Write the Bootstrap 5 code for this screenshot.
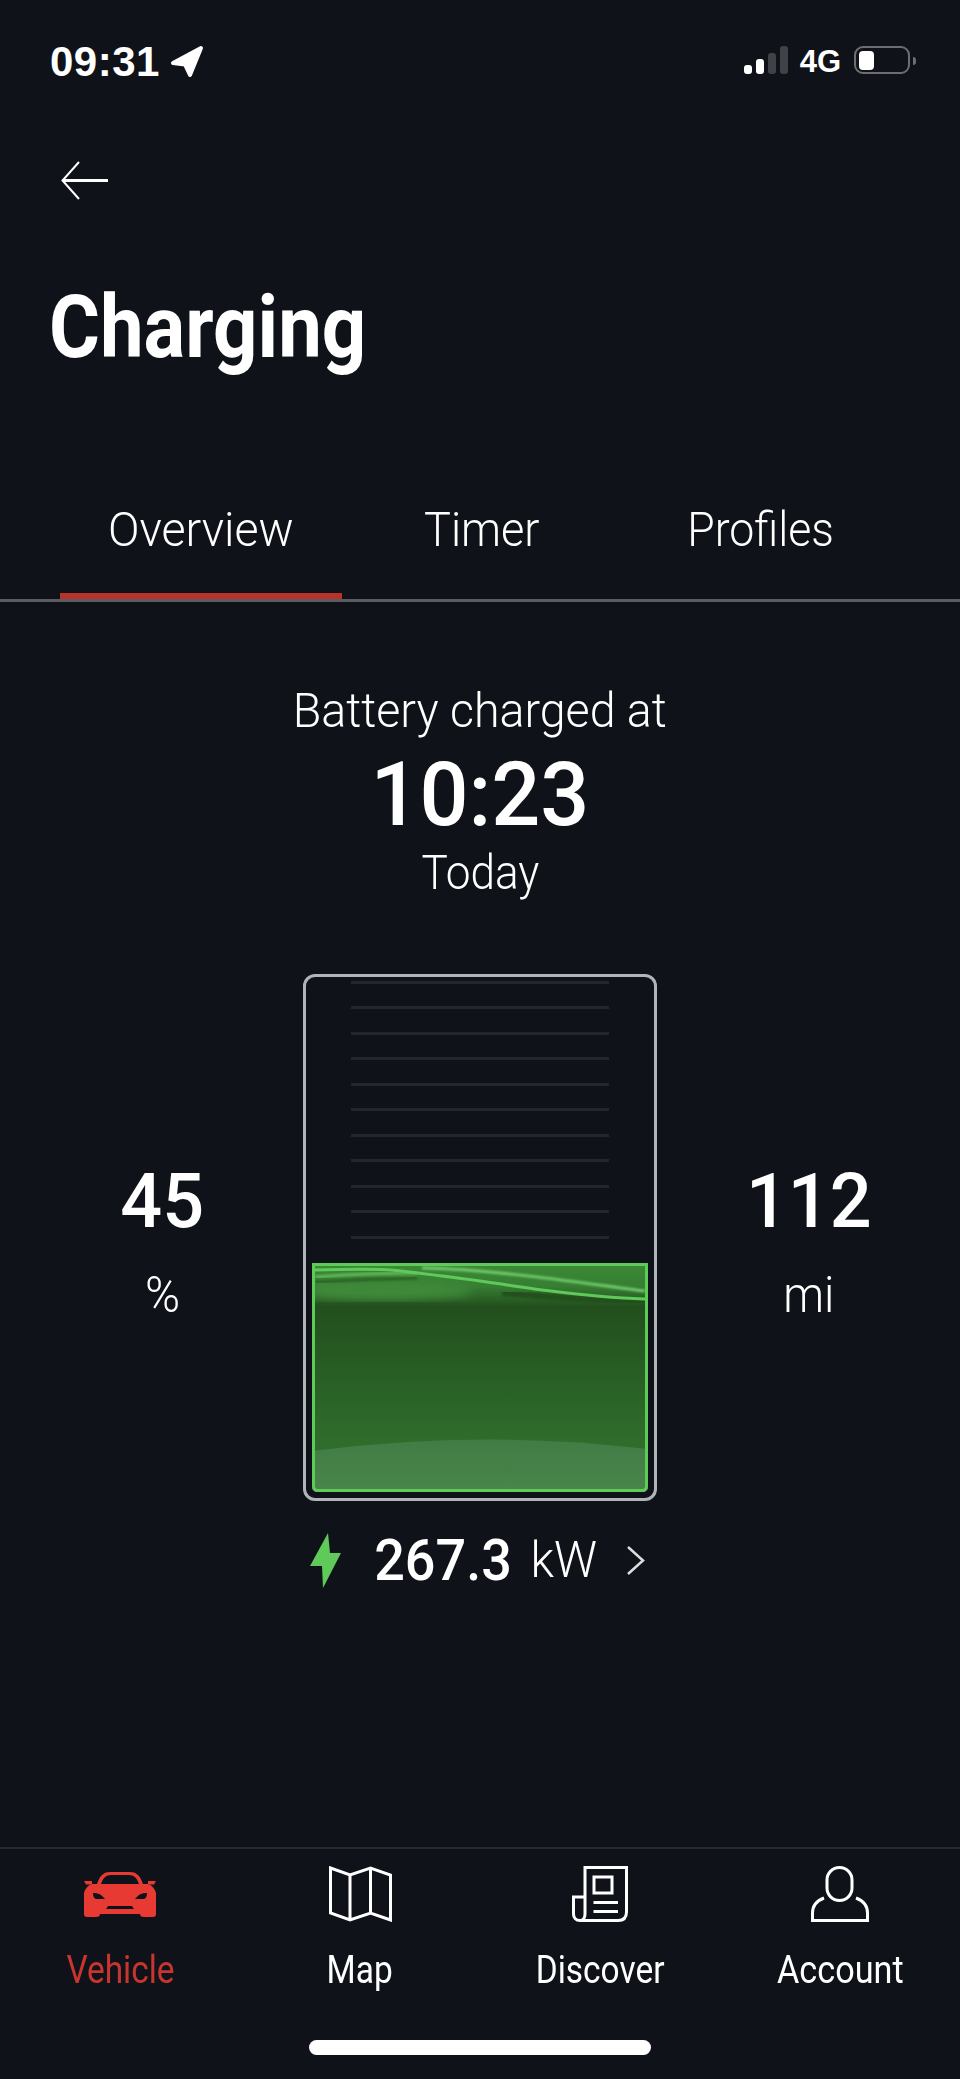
<!DOCTYPE html>
<html lang="en">
<head>
<meta charset="UTF-8">
<meta name="viewport" content="width=device-width, initial-scale=1">
<title>Charging</title>
<link href="https://cdn.jsdelivr.net/npm/bootstrap@5.3.3/dist/css/bootstrap.min.css" rel="stylesheet">
<style>
body { background: #0f1319; color: #fff; font-family: "Roboto", "Liberation Sans", sans-serif; font-weight: 300; }
.phone { width: 960px; height: 2079px; overflow: hidden; }
.squeeze { display: inline-block; white-space: nowrap; }
.sq-88 { transform: scaleX(.88); }
.sq-90 { transform: scaleX(.90); }
.sq-91 { transform: scaleX(.91); }
.sq-92 { transform: scaleX(.92); }
.sq-93 { transform: scaleX(.93); }
.sq-95 { transform: scaleX(.95); }
.sq-96 { transform: scaleX(.96); }
.sq-97 { transform: scaleX(.97); }

.statusbar { height: 100px; padding: 44px 44px 0 50px; font-family: "Liberation Sans", sans-serif; font-weight: 700; }
.clock { font-size: 42px; line-height: 36px; letter-spacing: .5px; }
.loc-arrow { margin-left: 10px; }
.net-type { font-size: 31px; line-height: 36px; margin: 0 13px 0 12px; }
.sig-bars { height: 28px; gap: 4px; margin-top: 2px; }
.sig-bars i { display: block; width: 8px; border-radius: 3px; background: #fff; }
.sig-bars .b1 { height: 9px; }
.sig-bars .b2 { height: 15px; }
.sig-bars .b3 { height: 21px; background: #3f4246; }
.sig-bars .b4 { height: 28px; background: #3f4246; }
.batt-icon { width: 56px; height: 28px; margin-top: 2px; border: 2.5px solid #6c6e72; border-radius: 9px; padding: 2.5px; }
.batt-icon i { display: block; width: 15px; height: 100%; background: #fff; border-radius: 4px; }
.batt-tip { width: 3px; height: 8px; margin: 13px 0 0 3px; background: #6c6e72; border-radius: 0 4px 4px 0; }

.back-row { padding: 61px 0 0 61px; height: 182px; }
.page-title { font-size: 88px; line-height: 90px; font-weight: 700; margin: 0 0 0 49px; }
.page-title .squeeze { transform: scaleX(.885); transform-origin: left center; }
.tab-row { margin-top: 128px; padding-left: 60px; border-bottom: 3px solid #5a5c60; }
.tab-item { width: 282px; height: 99px; font-size: 49px; line-height: 60px; text-align: center; border-bottom: 6px solid transparent; }
.tab-item.tab-on { border-bottom-color: #b8322c; }
.tab-item + .tab-item { width: 279px; }

.eta { padding-top: 81px; }
.eta-label { font-size: 48px; line-height: 56px; }
.eta-time { font-size: 89px; line-height: 90px; font-weight: 500; margin-top: 11px; }
.eta-day { font-size: 49px; line-height: 56px; margin-top: 5px; }

.gauge-row { margin-top: 73px; height: 527px; }
.stat { width: 303px; padding-top: 11px; }
.stat-left { padding-left: 22px; }
.stat-num { font-size: 76px; line-height: 80px; font-weight: 500; }
.stat-unit { font-size: 50px; line-height: 60px; margin-top: 24px; }
.batt-box { width: 354px; height: 527px; border: 3px solid #b0b3b8; border-radius: 12px; padding: 3.5px 6px 6px; }
.level-lines { gap: 22.5px; }
.level-lines i { display: block; width: 258px; height: 3px; background: #23262c; }
.batt-fill { width: 336px; height: 229px; display: block; }

.power-row { margin-top: 32px; height: 55px; padding-left: 310px; }
.power-num { width: 135px; margin-left: 34px; font-size: 58px; line-height: 55px; font-weight: 500; }
.power-unit { width: 62px; margin-left: 23px; font-size: 50px; line-height: 55px; }
.power-more { margin-left: 32px; }

.tabbar { margin-top: auto; border-top: 2px solid #26292e; padding-top: 15px; }
.tabbar-item { width: 240px; }
.tabbar-icon { height: 60px; }
.tabbar-label { font-size: 38px; line-height: 44px; margin-top: 24px; font-weight: 400; }
.tabbar-item.item-on .tabbar-label { color: #c8352f; }
.home-bar { width: 342px; height: 15px; border-radius: 8px; background: #fff; margin: 48px auto 24px; }
</style>
</head>
<body>
<div class="phone d-flex flex-column">

  <div class="statusbar d-flex justify-content-between">
    <div class="d-flex">
      <div class="clock">09:31</div>
      <svg class="loc-arrow" width="34" height="34" viewBox="0 0 34 34"><path d="M31 4 L3 19 L15 20.5 L20 31 Z" fill="#fff" stroke="#fff" stroke-width="4" stroke-linejoin="round"/></svg>
    </div>
    <div class="d-flex">
      <div class="sig-bars d-flex align-items-end"><i class="b1"></i><i class="b2"></i><i class="b3"></i><i class="b4"></i></div>
      <div class="net-type">4G</div>
      <div class="batt-icon"><i></i></div>
      <div class="batt-tip"></div>
    </div>
  </div>

  <div class="back-row">
    <svg class="d-block" width="48" height="39" viewBox="0 0 48 39" fill="none" stroke="#fff" stroke-width="2"><path d="M18 1 L1.5 19.5 L18 38"/><path d="M2 19.5 H47" stroke-width="3"/></svg>
  </div>

  <h1 class="page-title"><span class="squeeze">Charging</span></h1>

  <div class="tab-row d-flex">
    <div class="tab-item tab-on"><span class="squeeze sq-95">Overview</span></div>
    <div class="tab-item"><span class="squeeze sq-92">Timer</span></div>
    <div class="tab-item"><span class="squeeze sq-91">Profiles</span></div>
  </div>

  <div class="eta text-center">
    <div class="eta-label"><span class="squeeze sq-97">Battery charged at</span></div>
    <div class="eta-time"><span class="squeeze sq-97">10:23</span></div>
    <div class="eta-day"><span class="squeeze sq-90">Today</span></div>
  </div>

  <div class="gauge-row d-flex align-items-center">
    <div class="stat stat-left text-center">
      <div class="stat-num"><span class="squeeze sq-97">45</span></div>
      <div class="stat-unit"><span class="squeeze sq-95">%</span></div>
    </div>
    <div class="batt-box d-flex flex-column align-items-center flex-shrink-0">
      <div class="level-lines d-flex flex-column flex-fill">
        <i></i><i></i><i></i><i></i><i></i><i></i><i></i><i></i><i></i><i></i><i></i>
      </div>
      <svg class="batt-fill" viewBox="0 0 336 229">
        <defs>
          <linearGradient id="fillGrad" x1="0" y1="0" x2="0" y2="1">
            <stop offset="0" stop-color="#3c8a36"/>
            <stop offset=".1" stop-color="#377f33"/>
            <stop offset=".19" stop-color="#224f1d"/>
            <stop offset=".78" stop-color="#2f6d2c"/>
          </linearGradient>
          <linearGradient id="arcGrad" x1="0" y1="0" x2="0" y2="1">
            <stop offset="0" stop-color="#417c44"/>
            <stop offset="1" stop-color="#49864b"/>
          </linearGradient>
          <filter id="soft1"><feGaussianBlur stdDeviation="1"/></filter>
          <filter id="soft2"><feGaussianBlur stdDeviation="5"/></filter>
          <clipPath id="fillClip"><path d="M0 0 H336 V223 Q336 229 330 229 H6 Q0 229 0 223 Z"/></clipPath>
        </defs>
        <g clip-path="url(#fillClip)">
          <rect width="336" height="229" fill="url(#fillGrad)"/>
          <ellipse cx="70" cy="28" rx="90" ry="9" fill="#3f8a3a" filter="url(#soft2)"/>
          <path d="M190 30 C250 35 300 38 336 39" fill="none" stroke="#224f1d" stroke-width="6" filter="url(#soft1)"/>
          <path d="M3 14 C40 11 70 10 105 10" fill="none" stroke="#62b85c" stroke-width="3" filter="url(#soft1)"/>
          <path d="M3 19 C40 17 70 16 105 15" fill="none" stroke="#2a6326" stroke-width="3" filter="url(#soft1)"/>
          <path d="M110 5 C180 6 270 20 333 28" fill="none" stroke="#70cc6a" stroke-width="3" filter="url(#soft1)"/>
          <path d="M3 7 C40 6 70 6 85 7.5 C115 11 140 14 168 18 C190 21 215 25 235 27.5 C270 32 300 35 333 36" fill="none" stroke="#5fc95a" stroke-width="3"/>
          <path d="M0 188 Q168 166 336 186 V229 H0 Z" fill="url(#arcGrad)"/>
        </g>
        <path d="M1.5 1.5 H334.5 V223 Q334.5 227.5 330 227.5 H6 Q1.5 227.5 1.5 223 Z" fill="none" stroke="#5fc95a" stroke-width="3"/>
      </svg>
    </div>
    <div class="stat text-center">
      <div class="stat-num"><span class="squeeze sq-97">112</span></div>
      <div class="stat-unit"><span class="squeeze sq-92">mi</span></div>
    </div>
  </div>

  <div class="power-row d-flex align-items-center">
    <svg width="31" height="55" viewBox="0 0 31 55"><path d="M18 0 L0 33 H12 L13 55 L31 20 H20 Z" fill="#5fc95a"/></svg>
    <div class="power-num d-flex justify-content-center"><span class="squeeze sq-93">267.3</span></div>
    <div class="power-unit d-flex justify-content-center"><span class="squeeze sq-96">kW</span></div>
    <svg class="power-more" width="18" height="29" viewBox="0 0 18 29" fill="none" stroke="#ddd" stroke-width="2.5"><path d="M1 1 L16 14.5 L1 28"/></svg>
  </div>

  <div class="tabbar">
    <div class="d-flex">
      <div class="tabbar-item item-on text-center">
        <div class="tabbar-icon d-flex align-items-center justify-content-center">
          <svg width="72" height="45" viewBox="0 0 72 45">
            <path fill="#e63a32" fill-rule="evenodd" d="M13 12 C16 3 20 0 26 0 H46 C52 0 56 3 59 12 Z M17 12 H55 C53 6 50 3 45 3 H27 C22 3 19 6 17 12 Z"/>
            <path fill="#e63a32" d="M0 9 H8 V12.5 H2 Z M72 9 H64 V12.5 H70 Z"/>
            <path fill="#e63a32" d="M8 12 H64 C68 13 71 17 72 21 V42 Q72 45 69 45 H60 Q56 45 56 42 H16 Q16 45 12 45 H3 Q0 45 0 42 V21 C1 17 4 13 8 12 Z"/>
            <path fill="#0f1319" d="M9 21 Q16 20 21 27 H12 Q9 26 9 21 Z M63 21 Q56 20 51 27 H60 Q63 26 63 21 Z M22 37 L24 34 H48 L50 37 Z"/>
          </svg>
        </div>
        <div class="tabbar-label"><span class="squeeze sq-88">Vehicle</span></div>
      </div>
      <div class="tabbar-item text-center">
        <div class="tabbar-icon d-flex align-items-center justify-content-center">
          <svg width="63" height="56" viewBox="0 0 63 56" fill="none" stroke="#fff" stroke-width="3"><path d="M1.5 2 L21 9 L41.5 2 L61.5 9 V54 L41.5 47 L21 54 L1.5 47 Z M21 9 V54 M41.5 2 V47"/></svg>
        </div>
        <div class="tabbar-label"><span class="squeeze sq-88">Map</span></div>
      </div>
      <div class="tabbar-item text-center">
        <div class="tabbar-icon d-flex align-items-center justify-content-center">
          <svg width="56" height="56" viewBox="0 0 56 56" fill="none" stroke="#fff" stroke-width="3"><path d="M13 31 V1.5 H54.5 V46 Q54.5 54.5 46 54.5 H8 C4 54.5 1.5 52 1.5 48 V31 H13 V48 C13 52 11 54.5 8 54.5"/><path d="M22 11 H40 V27 H22 Z M21.5 36.5 H46 M21.5 45.5 H46"/></svg>
        </div>
        <div class="tabbar-label"><span class="squeeze sq-88">Discover</span></div>
      </div>
      <div class="tabbar-item text-center">
        <div class="tabbar-icon d-flex align-items-center justify-content-center">
          <svg width="58" height="56" viewBox="0 0 58 56" fill="none" stroke="#fff" stroke-width="3"><rect x="16" y="1.5" width="25" height="33" rx="12.5"/><path d="M13 32 C5 35 1.5 41 1.5 47 V54.5 H56.5 V47 C56.5 41 53 35 45 32"/></svg>
        </div>
        <div class="tabbar-label"><span class="squeeze sq-90">Account</span></div>
      </div>
    </div>
    <div class="home-bar"></div>
  </div>

</div>
</body>
</html>
